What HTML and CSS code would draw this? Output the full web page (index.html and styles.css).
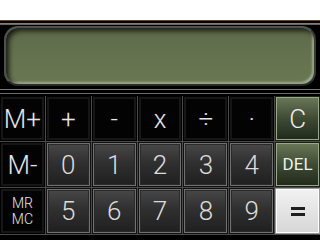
FILE: index.html
```html
<!DOCTYPE html>
<html>
<head>
<meta charset="utf-8">
<link rel="stylesheet" href="styles.css">
</head>
<body>
<div class="top"></div>
<div class="calc">
  <div class="bar"></div>
  <div class="display"></div>
  <div class="sep"></div>
  <div class="keys">
    <div class="key fn">M+</div>
    <div class="key fn">+</div>
    <div class="key fn">-</div>
    <div class="key fn">x</div>
    <div class="key fn">÷</div>
    <div class="key fn">·</div>
    <div class="key green">C</div>
    <div class="key fn">M-</div>
    <div class="key num">0</div>
    <div class="key num">1</div>
    <div class="key num">2</div>
    <div class="key num">3</div>
    <div class="key num">4</div>
    <div class="key green small">DEL</div>
    <div class="key fn mem"><span class="line">MR</span><span class="line">MC</span></div>
    <div class="key num">5</div>
    <div class="key num">6</div>
    <div class="key num">7</div>
    <div class="key num">8</div>
    <div class="key num">9</div>
    <div class="key eq"><span class="eqbars"></span></div>
  </div>
</div>
</body>
</html>
```
FILE: styles.css
```css
html, body {
  margin: 0;
  padding: 0;
  background: #ffffff;
  width: 320px;
  height: 240px;
  overflow: hidden;
  font-family: "Roboto", "Liberation Sans", Arial, sans-serif;
}
.top {
  height: 20px;
  background: #ffffff;
}
.calc {
  height: 219px;
  background: #000000;
  border-top: 1px solid #6a4628;
  padding-top: 2px;
  display: flex;
  flex-direction: column;
}
.bar {
  height: 2px;
  background: linear-gradient(#8a8a8a, #5a5a5a);
  margin-bottom: 1px;
}
.display {
  height: 56px;
  margin: 0 4px;
  border-radius: 14px;
  border: 2px solid #505050;
  border-bottom-color: #2a2a2a;
  border-right-color: #3a3a3a;
  background: linear-gradient(#5d694a, #65724f 50%, #6a7753);
  box-shadow: inset 3px 3px 5px #1a1e14, inset -2px -2px 2px #a4ae90;
}
.sep {
  height: 10px;
  background: linear-gradient(#000 0, #000 3px, #7a7a7a 3px, #7a7a7a 4px, #000 4px, #000 7px, #6a6a6a 7px, #6a6a6a 8px, #000 8px);
}
.keys {
  display: grid;
  grid-template-columns: repeat(7, 1fr);
  grid-template-rows: 45px 45px 46px;
  gap: 1px;
  background: #4a4a4a;
  height: 138px;
  border-bottom: 1px solid #4a4a4a;
}
.key {
  display: flex;
  align-items: center;
  justify-content: center;
  color: #e6e6e6;
  font-size: 26px;
  font-weight: 300;
  line-height: 1;
}
.fn {
  background: #030303;
  box-shadow: inset 0 0 0 1px #000, inset 0 0 0 3px #161616;
}
.num {
  background: linear-gradient(#4a4a4a, #303030 45%, #1e1e1e);
  box-shadow: inset 0 0 0 1px #111, inset 0 0 0 2px #707070, inset 0 0 0 3px #2a2a2a;
  color: #dcdcdc;
}
.green {
  background: linear-gradient(#6c7a5a, #3f4a34 50%, #1f2819);
  box-shadow: inset 0 0 0 1px #1a2216, inset 0 0 0 2px #9aa887;
  color: #eef0ea;
}
.small {
  font-size: 17px;
  font-weight: 400;
}
.mem {
  flex-direction: column;
  font-size: 14px;
  font-weight: 300;
  line-height: 16px;
}
.line {
  display: block;
  height: 16px;
}
.eq {
  background: linear-gradient(#f2f2f2, #d6d6d6);
  box-shadow: inset 0 0 0 1px #9a9a9a, inset 0 0 0 2px #ffffff;
}
.eqbars {
  display: block;
  width: 14px;
  height: 3px;
  border-top: 3px solid #1e1e1e;
  border-bottom: 3px solid #1e1e1e;
}
```
